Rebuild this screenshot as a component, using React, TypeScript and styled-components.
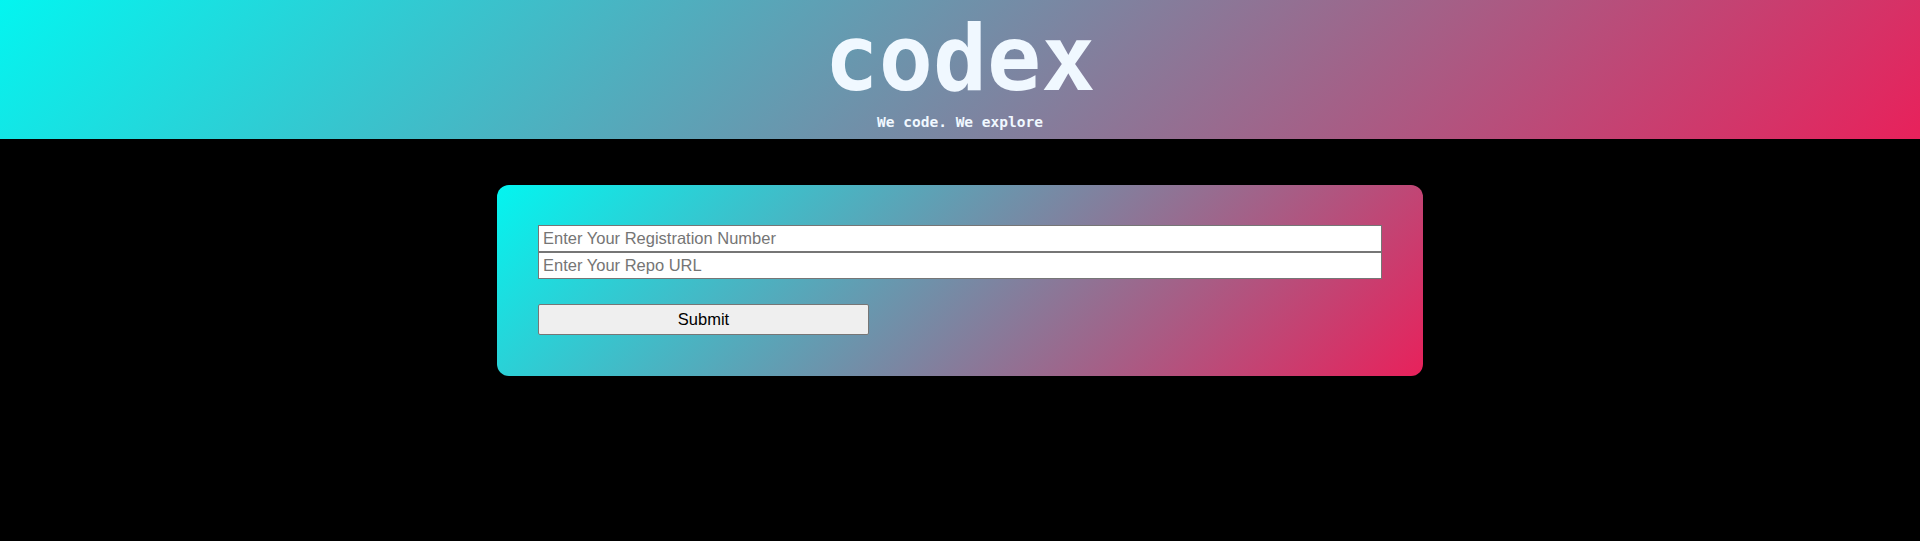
import React from 'react'
import styled, { createGlobalStyle } from 'styled-components'

const GlobalStyle = createGlobalStyle`
  html, body {
    margin: 0;
    padding: 0;
    background: #000;
  }
  body {
    font-family: "Liberation Sans", Arial, sans-serif;
  }
`

const brandGradient = 'linear-gradient(135deg, #03f5f0, #e8215b)'

const Header = styled.header`
  display: flex;
  flex-flow: column nowrap;
  align-items: center;
  height: 139px;
  box-sizing: border-box;
  padding-top: 14px;
  background: ${brandGradient};
  color: aliceblue;
  font-family: "DejaVu Sans Mono", "Liberation Mono", monospace;
  font-weight: bold;
`

const Title = styled.h1`
  margin: 0;
  font-size: 90px;
  line-height: 90px;
  font-weight: bold;
`

const Tagline = styled.p`
  margin: 11px 0 0;
  font-size: 14.5px;
  line-height: 15px;
`

const Main = styled.main`
  display: flex;
  justify-content: center;
  padding-top: 46px;
`

const Card = styled.form`
  display: flex;
  flex-flow: column nowrap;
  align-items: flex-start;
  width: 926px;
  box-sizing: border-box;
  padding: 40px 41px 41px;
  border-radius: 12px;
  background: ${brandGradient};
`

const Field = styled.input`
  display: block;
  width: 100%;
  height: 27px;
  box-sizing: border-box;
  margin: 0;
  padding: 1px 4px;
  border: 1px solid #767676;
  background: #fff;
  font-family: "Liberation Sans", Arial, sans-serif;
  font-size: 16.5px;
  color: #000;
  outline: none;

  &::placeholder {
    color: #757575;
  }
`

const SubmitButton = styled.button`
  width: 331px;
  height: 31px;
  margin-top: 25px;
  border: 1px solid #767676;
  border-radius: 2px;
  background: #efefef;
  font-family: "Liberation Sans", Arial, sans-serif;
  font-size: 16.5px;
  color: #000;
`

export default function App() {
  return (
    <>
      <GlobalStyle />
      <Header>
        <Title>codex</Title>
        <Tagline>We code. We explore</Tagline>
      </Header>
      <Main>
        <Card onSubmit={(e) => e.preventDefault()}>
          <Field type="text" placeholder="Enter Your Registration Number" />
          <Field type="text" placeholder="Enter Your Repo URL" />
          <SubmitButton type="submit">Submit</SubmitButton>
        </Card>
      </Main>
    </>
  )
}
